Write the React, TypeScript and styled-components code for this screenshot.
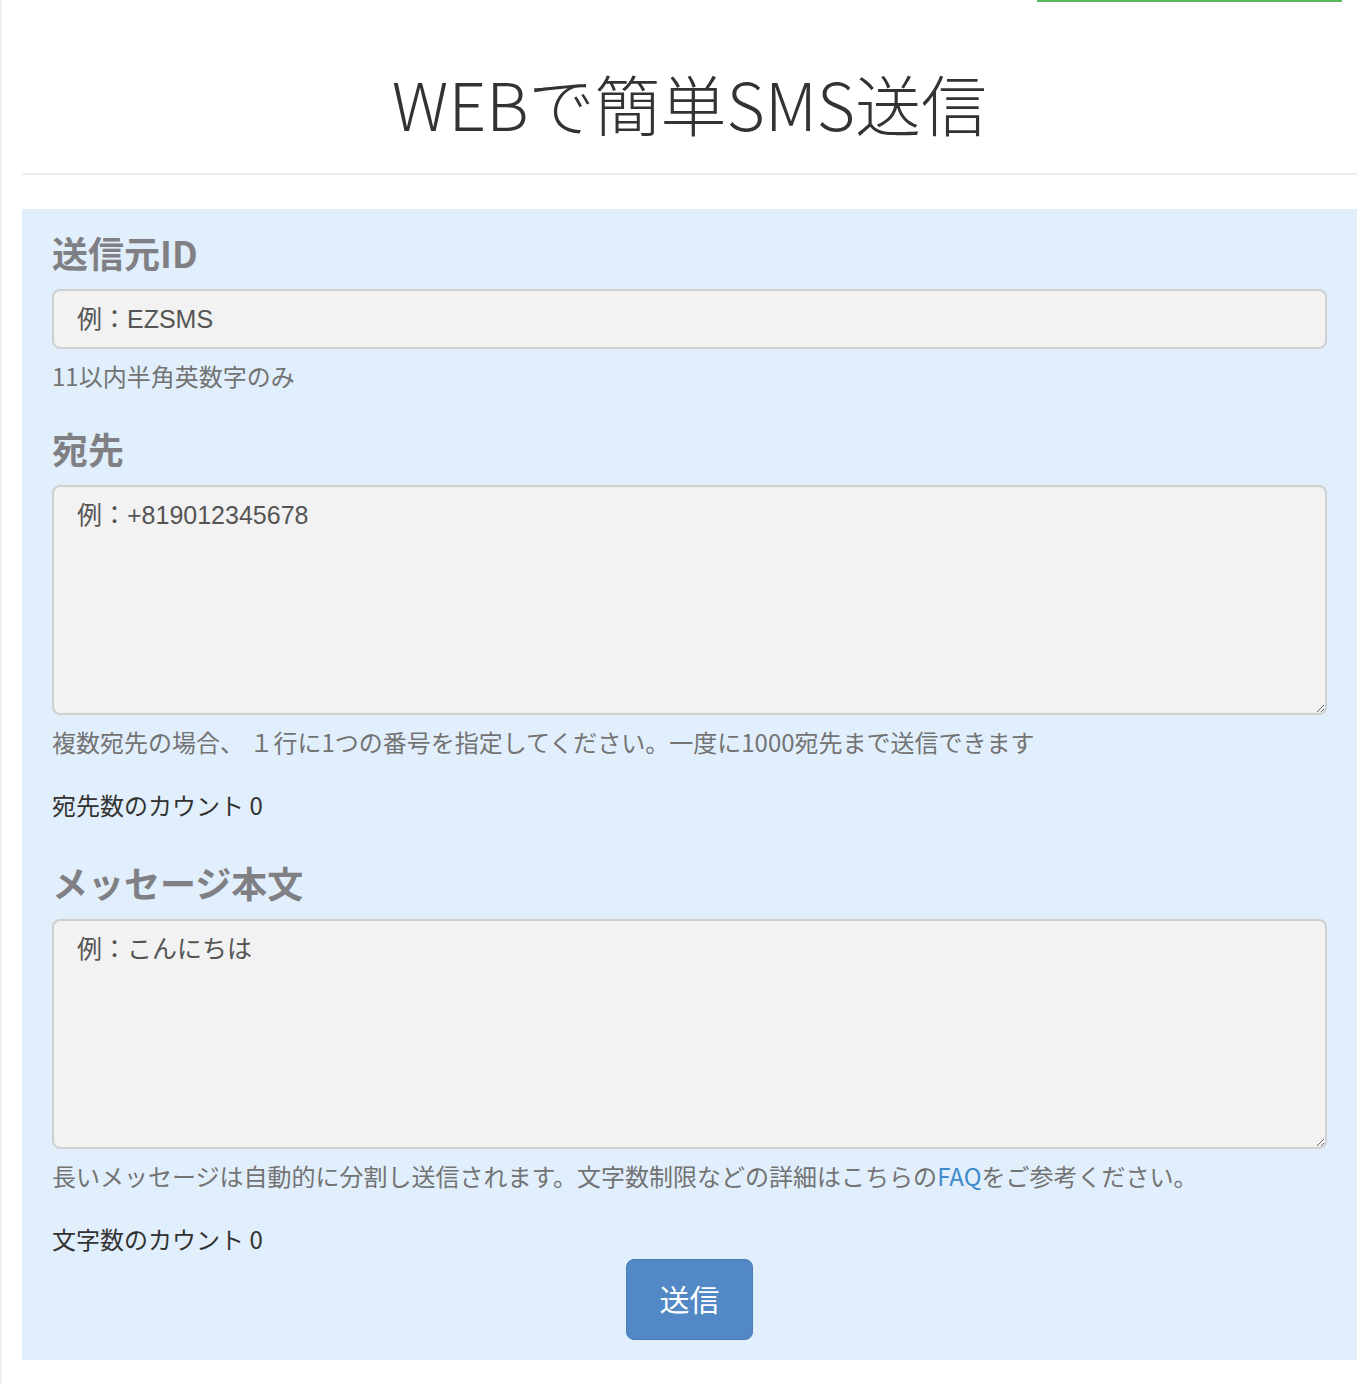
import React from "react";
import styled, { createGlobalStyle } from "styled-components";

const Global = createGlobalStyle`
  html, body { margin: 0; padding: 0; background: #fff; }
  body { font-family: "Liberation Sans", "Noto Sans CJK JP", sans-serif; color: #333; }
  * { box-sizing: border-box; }
`;

const Page = styled.div`
  min-height: 1384px;
  border-left: 2px solid #efefef;
  padding: 0 12px 0 20px;
  display: flex;
  flex-direction: column;
`;

const TopBar = styled.div`
  display: flex;
  justify-content: flex-end;
  height: 2px;
  margin-right: 15px;
`;

const GreenEdge = styled.div`
  width: 305px;
  height: 2px;
  background: #5cb85c;
`;

const Title = styled.h1`
  margin: 64px 0 0;
  font-family: "Noto Sans CJK JP", sans-serif;
  font-weight: 300;
  font-size: 66px;
  line-height: 72px;
  text-align: center;
  color: #333;
`;

const Rule = styled.hr`
  margin: 35px 0 0;
  border: 0;
  border-top: 2px solid #eee;
`;

const Panel = styled.form`
  margin-top: 34px;
  background: #e1effd;
  padding: 23px 30px 20px;
  display: flex;
  flex-direction: column;
`;

const Label = styled.h3<{ $gap?: number }>`
  margin: ${(p) => p.$gap ?? 0}px 0 17px;
  font-family: "Noto Sans CJK JP", sans-serif;
  font-weight: 700;
  font-size: 36px;
  line-height: 40px;
  color: #808084;
`;

const fieldBase = `
  width: 100%;
  border: 2px solid #cfcfcf;
  border-radius: 8px;
  background: #f2f2f2;
  font-family: "Liberation Sans", "Noto Sans CJK JP", sans-serif;
  font-size: 25px;
  color: #555;
  outline: none;
  &::placeholder { color: #555; opacity: 1; }
`;

const Input = styled.input`
  ${fieldBase}
  height: 60px;
  padding: 0 23px;
`;

const TextArea = styled.textarea`
  ${fieldBase}
  height: 230px;
  padding: 13px 23px;
  line-height: 30px;
  resize: vertical;
  display: block;
`;

const Help = styled.p`
  margin: 12px 0 0;
  font-family: "Noto Sans CJK JP", sans-serif;
  font-size: 24px;
  line-height: 30px;
  color: #737373;
`;

const Link = styled.a`
  color: #428bca;
  text-decoration: none;
`;

const Count = styled.p`
  margin: 33px 0 0;
  font-family: "Noto Sans CJK JP", sans-serif;
  font-size: 24px;
  line-height: 30px;
  color: #333;
`;

const ButtonRow = styled.div`
  display: flex;
  justify-content: center;
  margin-top: 5px;
`;

const SendButton = styled.button`
  width: 127px;
  height: 81px;
  padding: 0 0 4px;
  border: 1px solid #4a7db8;
  border-radius: 8px;
  background: #5188c5;
  color: #fff;
  font-family: "Noto Sans CJK JP", sans-serif;
  font-size: 30px;
  cursor: pointer;
`;

export default function App() {
  return (
    <>
      <Global />
      <Page>
        <TopBar>
          <GreenEdge />
        </TopBar>
        <Title>WEBで簡単SMS送信</Title>
        <Rule />
        <Panel onSubmit={(e) => e.preventDefault()}>
          <Label>送信元ID</Label>
          <Input placeholder="例：EZSMS" />
          <Help>11以内半角英数字のみ</Help>

          <Label $gap={37}>宛先</Label>
          <TextArea placeholder="例：+819012345678" />
          <Help>複数宛先の場合、 １行に1つの番号を指定してください。一度に1000宛先まで送信できます</Help>
          <Count>宛先数のカウント 0</Count>

          <Label $gap={42}>メッセージ本文</Label>
          <TextArea placeholder="例：こんにちは" />
          <Help>
            長いメッセージは自動的に分割し送信されます。文字数制限などの詳細はこちらの<Link href="#">FAQ</Link>をご参考ください。
          </Help>
          <Count>文字数のカウント 0</Count>
          <ButtonRow>
            <SendButton type="submit">送信</SendButton>
          </ButtonRow>
        </Panel>
      </Page>
    </>
  );
}
